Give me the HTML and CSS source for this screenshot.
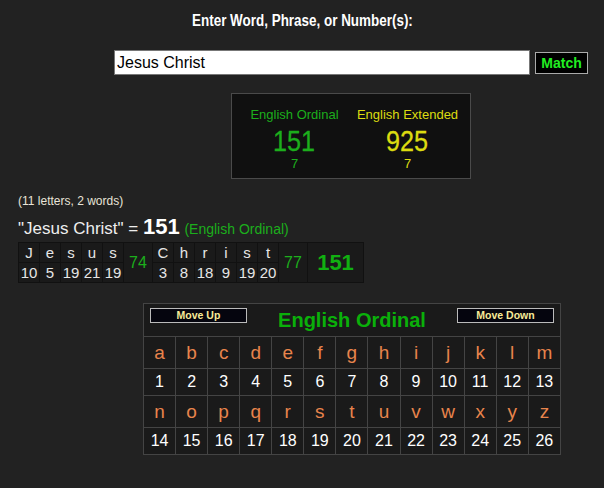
FILE: index.html
```html
<!DOCTYPE html>
<html lang="en">
<head>
    <meta charset="UTF-8">
    <meta name="viewport" content="width=device-width, initial-scale=1.0">
    <title>Gematria Calculator</title>
    <link rel="stylesheet" href="styles.css">
</head>
<body>

    <div class="head"><span>Enter Word, Phrase, or Number(s):</span></div>

    <div class="search">
        <input type="text" class="phrase" value="Jesus Christ">
        <button class="match">Match</button>
    </div>

    <div class="summary">
        <div class="col green">
            <div class="label">English Ordinal</div>
            <div class="value"><span>151</span></div>
            <div class="reduced">7</div>
        </div>
        <div class="col yellow">
            <div class="label">English Extended</div>
            <div class="value"><span>925</span></div>
            <div class="reduced">7</div>
        </div>
    </div>

    <div class="count">(11 letters, 2 words)</div>
    <div class="equation">"Jesus Christ" = <b>151</b> <span class="green">(English Ordinal)</span></div>

    <table class="breakdown">
        <tr>
            <td>J</td><td>e</td><td>s</td><td>u</td><td>s</td>
            <td class="sum" rowspan="2">74</td>
            <td>C</td><td>h</td><td>r</td><td>i</td><td>s</td><td>t</td>
            <td class="sum" rowspan="2">77</td>
            <td class="total" rowspan="2">151</td>
        </tr>
        <tr class="nums">
            <td>10</td><td>5</td><td>19</td><td>21</td><td>19</td>
            <td>3</td><td>8</td><td>18</td><td>9</td><td>19</td><td>20</td>
        </tr>
    </table>

    <table class="cipher">
        <tr>
            <th colspan="13">
                <div class="cipher-head">
                    <button class="move">Move Up</button>
                    <span class="title">English Ordinal</span>
                    <button class="move">Move Down</button>
                </div>
            </th>
        </tr>
        <tr class="letters"><td>a</td><td>b</td><td>c</td><td>d</td><td>e</td><td>f</td><td>g</td><td>h</td><td>i</td><td>j</td><td>k</td><td>l</td><td>m</td></tr>
        <tr class="values"><td>1</td><td>2</td><td>3</td><td>4</td><td>5</td><td>6</td><td>7</td><td>8</td><td>9</td><td>10</td><td>11</td><td>12</td><td>13</td></tr>
        <tr class="letters"><td>n</td><td>o</td><td>p</td><td>q</td><td>r</td><td>s</td><td>t</td><td>u</td><td>v</td><td>w</td><td>x</td><td>y</td><td>z</td></tr>
        <tr class="values"><td>14</td><td>15</td><td>16</td><td>17</td><td>18</td><td>19</td><td>20</td><td>21</td><td>22</td><td>23</td><td>24</td><td>25</td><td>26</td></tr>
    </table>

</body>
</html>
```

FILE: styles.css
```css
body {
    font-family: "Liberation Sans", Arial, sans-serif;
    margin: 0;
    background-color: #222;
    color: #e6e6e6;
}
.green { color: #1cae1c; }
.yellow { color: #dcdc10; }

/* text in the original renders narrower than Arial */
.head {
    text-align: center;
    padding-top: 12px;
    height: 20px;
    font-weight: bold;
    font-size: 16px;
    color: #fff;
}
.head span { display: inline-block; transform: scaleX(0.84); }

.search { display: flex; align-items: center; gap: 5px; margin: 18px 0 0 114px; }
.phrase {
    width: 416px;
    height: 25px;
    box-sizing: border-box;
    border: 1px solid #777;
    padding: 0 2px;
    font-family: "Liberation Sans", Arial, sans-serif;
    font-size: 16px;
    color: #000;
    background: #fff;
}
.match {
    width: 53px;
    height: 22px;
    padding: 0;
    background: #000;
    border: 1px solid #aaa;
    color: #22ee22;
    font-family: "Liberation Sans", Arial, sans-serif;
    font-weight: bold;
    font-size: 14px;
}

.summary {
    display: flex;
    width: 240px;
    height: 86px;
    box-sizing: border-box;
    margin: 18px 0 0 231px;
    padding: 13px 6px 0;
    background: #101010;
    border: 1px solid #4a4a4a;
}
.col { width: 114px; text-align: center; }
.label { font-size: 13px; height: 16px; }
.value { font-size: 30px; line-height: 30px; margin-top: 3px; }
.value span { display: inline-block; transform: scaleX(0.84); -webkit-text-stroke: 0.3px currentColor; }
.reduced { font-size: 13px; line-height: 14px; margin-top: 1px; }

.count { margin: 15px 0 0 18px; font-size: 12px; color: #e8e4d8; }
.equation { margin: 8px 0 0 18px; font-size: 17px; line-height: 22px; color: #eee; }
.equation b { font-size: 22px; color: #fff; }
.equation .green { font-size: 14px; }

.breakdown {
    margin: 2px 0 0 18px;
    border-collapse: separate;
    border-spacing: 1px;
    background: #111;
    text-align: center;
}
.breakdown td {
    width: 20px;
    height: 19px;
    padding: 0;
    background: #1a1a1a;
    font-size: 15px;
    line-height: 18px;
}
.breakdown .sum { width: 28px; color: #1cae1c; font-size: 16px; }
.breakdown .total { width: 55px; color: #11b011; font-size: 22px; font-weight: bold; }

.cipher {
    margin: 20px 0 0 143px;
    width: 418px;
    border-collapse: collapse;
    background: #1a1a1a;
    text-align: center;
}
.cipher th, .cipher td { border: 1px solid #444; padding: 0; }
.cipher th { height: 32px; }
.cipher-head { display: flex; align-items: center; justify-content: space-between; padding: 0 6px; }
.move {
    width: 97px;
    height: 15px;
    padding: 0;
    background: #05050e;
    border: 1px solid #bbb;
    color: #f8eb98;
    font-family: "Liberation Sans", Arial, sans-serif;
    font-weight: bold;
    font-size: 10.5px;
    margin-top: -10px;
}
.title { font-size: 20px; font-weight: bold; color: #0ab00a; }
.letters td { height: 31px; font-size: 19px; color: #e8844c; }
.values td { height: 26px; font-size: 16px; color: #fff; }
```
